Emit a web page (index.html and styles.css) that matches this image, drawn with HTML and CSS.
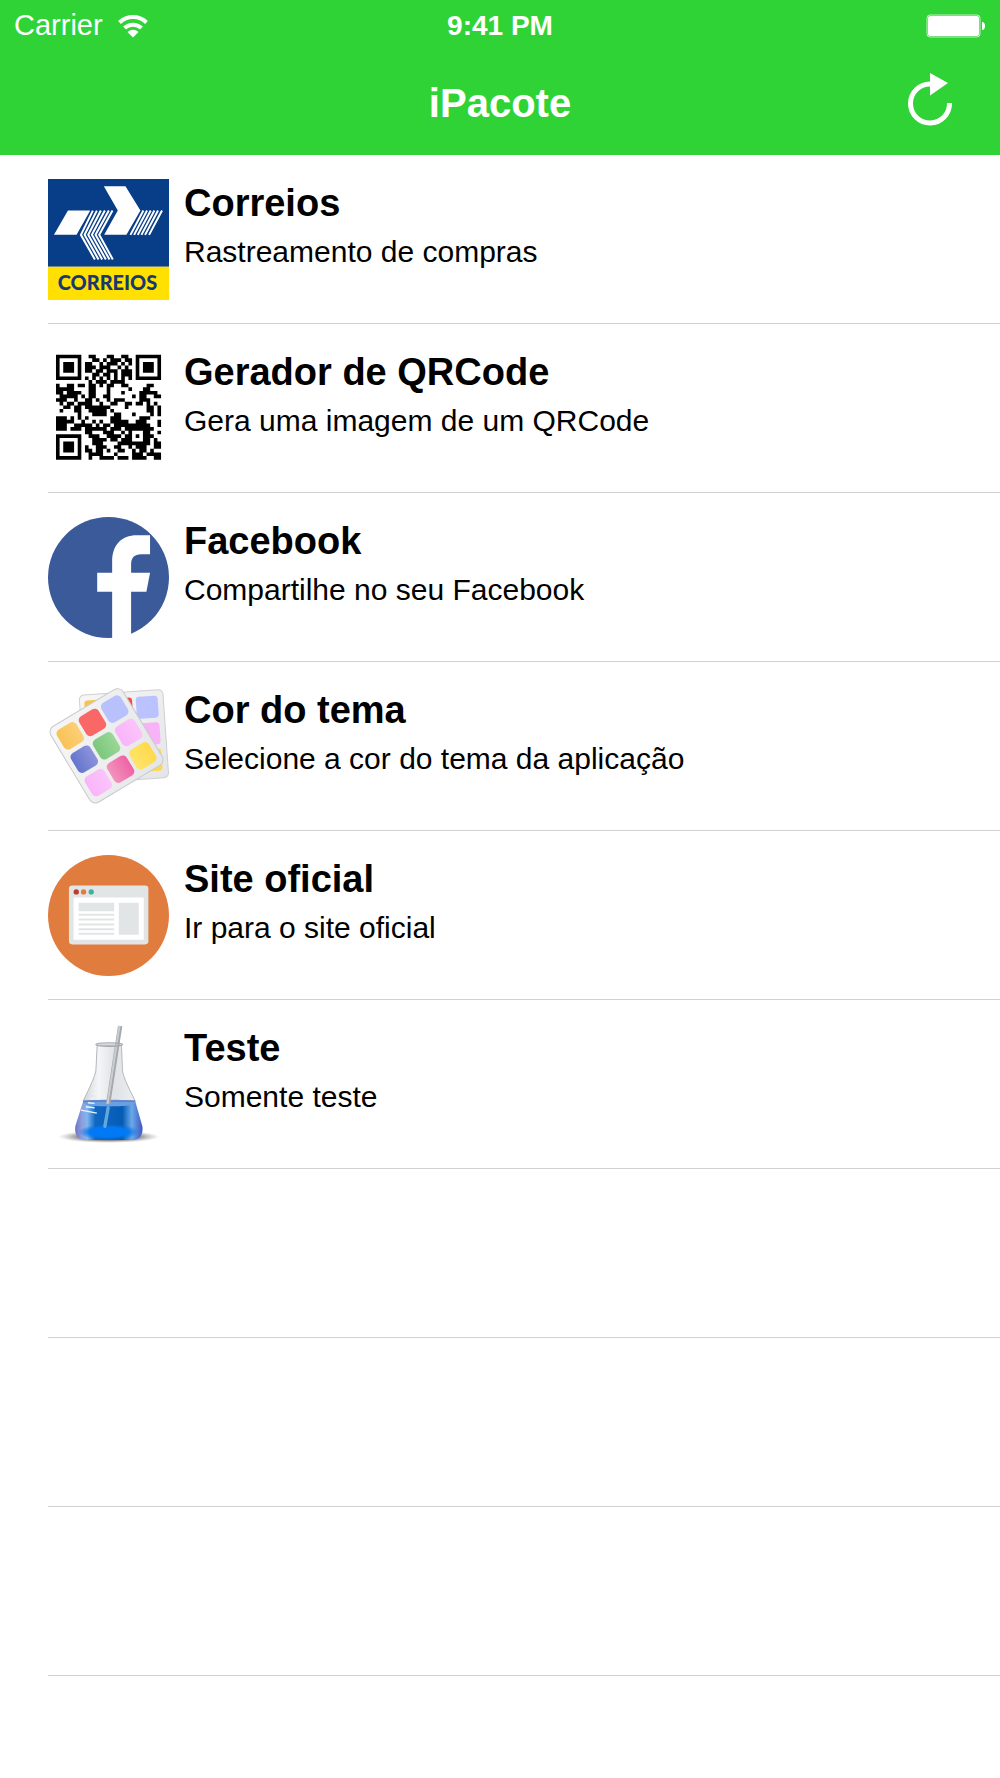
FILE: index.html
```html
<!DOCTYPE html>
<html lang="pt-BR">
<head>
    <meta charset="UTF-8">
    <meta name="viewport" content="width=device-width, initial-scale=1.0">
    <title>iPacote</title>
    <link rel="stylesheet" href="styles.css">
</head>
<body>
    <header>
        <div class="status-bar">
            <div class="carrier">
                <span>Carrier</span>
                <svg class="wifi" viewBox="0 0 60 48" aria-hidden="true">
                    <g fill="none" stroke="#fff" stroke-width="8">
                        <path d="M3 17a39 39 0 0 1 54 0"/>
                        <path d="M13 28a25 25 0 0 1 34 0"/>
                    </g>
                    <path d="M30 47L19 36a16 16 0 0 1 22 0z" fill="#fff"/>
                </svg>
            </div>
            <span class="time">9:41 PM</span>
            <svg class="battery" viewBox="0 0 60 24" aria-hidden="true">
                <rect x="1" y="1" width="53" height="22" rx="3" fill="none" stroke="#fff" stroke-opacity=".7"/>
                <rect x="2" y="2" width="51" height="20" rx="2" fill="#fff"/>
                <path d="M56 8q3 0 3 4t-3 4z" fill="#fff"/>
            </svg>
        </div>
        <div class="nav-bar">
            <h1>iPacote</h1>
            <button type="button" class="refresh" aria-label="Atualizar">
                <svg viewBox="0 0 88 108" aria-hidden="true">
                    <path d="M44 22A39 39 0 1 0 83 60" fill="none" stroke="#fff" stroke-width="10"/>
                    <path d="M44 0l36 20-36 25z" fill="#fff"/>
                </svg>
            </button>
        </div>
    </header>
    <main>
        <ul class="menu">
            <li>
                <a href="#correios">
                    <svg class="icon" viewBox="24 26 364 364" aria-hidden="true">
                        <path fill="#083e87" d="M24 26h364v264H24z"/>
                        <path fill="#ffe000" d="M24 290h364v100H24z"/>
                        <g fill="#fff">
                            <path d="M84 121h67l-41 73H42zM192 48h65l45 73-42 73h-67l41-73z"/>
                        </g>
                        <g fill="none" stroke="#fff" stroke-width="6">
                            <path d="M159 121l-36 73 42 74M171 121l-37 73 42 74M183 121l-38 73 42 74M195 121l-39 73 42 74M207 121l-40 73 42 74M218 121l-40 73 41 74"/>
                            <path d="M311 121l-39 73M322 121l-39 73M333 121l-39 73M344 121l-39 73M355 121l-39 73M367 121l-39 73"/>
                        </g>
                        <text class="correios-name" x="203" y="361" text-anchor="middle">CORREIOS</text>
                    </svg>
                    <div class="text">
                        <h2>Correios</h2>
                        <p>Rastreamento de compras</p>
                    </div>
                </a>
            </li>
            <li>
                <a href="#qrcode">
                    <svg class="icon" viewBox="0 0 364 364" aria-hidden="true">
                        <path id="qr-modules" transform="translate(24 20) scale(10.9)"/>
                    </svg>
                    <div class="text">
                        <h2>Gerador de QRCode</h2>
                        <p>Gera uma imagem de um QRCode</p>
                    </div>
                </a>
            </li>
            <li>
                <a href="#facebook">
                    <svg class="icon" viewBox="24 21 364 364" aria-hidden="true">
                        <circle cx="206" cy="203" r="182" fill="#3b5a9a"/>
                        <path fill="#fff" d="M217 385V246h-45v-57h45v-34c0-50 28-79 74-79h40v57h-27c-20 0-30 11-30 30v26h57l-11 57h-46v139z"/>
                    </svg>
                    <div class="text">
                        <h2>Facebook</h2>
                        <p>Compartilhe no seu Facebook</p>
                    </div>
                </a>
            </li>
            <li>
                <a href="#tema">
                    <svg class="icon" viewBox="24 18 364 364" aria-hidden="true">
                        <defs>
                            <linearGradient id="card" x1="0" y1="0" x2="1" y2="1">
                                <stop offset="0" stop-color="#f7f7f7"/>
                                <stop offset="1" stop-color="#e4e5e7"/>
                            </linearGradient>
                            <linearGradient id="orange"><stop stop-color="#f9c256"/><stop offset="1" stop-color="#fbd077"/></linearGradient>
                            <linearGradient id="yellow"><stop stop-color="#ffe46a"/><stop offset="1" stop-color="#ffd94a"/></linearGradient>
                            <linearGradient id="indigo"><stop stop-color="#6475cb"/><stop offset="1" stop-color="#8c93dd"/></linearGradient>
                            <linearGradient id="green"><stop stop-color="#7bc77d"/><stop offset="1" stop-color="#99d796"/></linearGradient>
                            <linearGradient id="lilac"><stop stop-color="#f9b4fb"/><stop offset="1" stop-color="#fbc4fa"/></linearGradient>
                            <linearGradient id="pink"><stop stop-color="#f293bd"/><stop offset="1" stop-color="#ee63a5"/></linearGradient>
                        </defs>
                        <g transform="translate(252 163) rotate(-4)">
                            <rect x="-126" y="-126" width="252" height="265" rx="14" fill="url(#card)" stroke="#cfcfd1" stroke-width="3"/>
                            <rect x="-112" y="-109" width="66" height="66" rx="10" fill="#f6c34f"/>
                            <rect x="-34" y="-109" width="66" height="66" rx="10" fill="#ee4f50"/>
                            <rect x="43" y="-109" width="66" height="66" rx="10" fill="#bac2ff"/>
                            <rect x="43" y="-29" width="66" height="66" rx="10" fill="#f8b2f8"/>
                            <rect x="43" y="51" width="66" height="66" rx="10" fill="#ffd84f"/>
                        </g>
                        <g transform="translate(200 198) rotate(-31)">
                            <rect x="-127" y="-133" width="254" height="266" rx="20" fill="url(#card)" stroke="#c8c9cb" stroke-width="3"/>
                            <rect x="-112" y="-116" width="68" height="68" rx="14" fill="url(#orange)"/>
                            <rect x="-34" y="-116" width="68" height="68" rx="14" fill="#fa6767"/>
                            <rect x="44" y="-116" width="68" height="68" rx="14" fill="#b9c1fd"/>
                            <rect x="-112" y="-34" width="68" height="68" rx="14" fill="url(#indigo)"/>
                            <rect x="-34" y="-34" width="68" height="68" rx="14" fill="url(#green)"/>
                            <rect x="44" y="-34" width="68" height="68" rx="14" fill="url(#lilac)"/>
                            <rect x="-112" y="48" width="68" height="68" rx="14" fill="url(#lilac)"/>
                            <rect x="-34" y="48" width="68" height="68" rx="14" fill="url(#pink)"/>
                            <rect x="44" y="48" width="68" height="68" rx="14" fill="url(#yellow)"/>
                        </g>
                    </svg>
                    <div class="text">
                        <h2>Cor do tema</h2>
                        <p>Selecione a cor do tema da aplicação</p>
                    </div>
                </a>
            </li>
            <li>
                <a href="#site">
                    <svg class="icon" viewBox="24 30 364 364" aria-hidden="true">
                        <circle cx="206" cy="212" r="182" fill="#e17c3f"/>
                        <rect x="87" y="122" width="239" height="177" rx="10" fill="#e1e5e6"/>
                        <circle cx="109" cy="141" r="8" fill="#c03a2b"/>
                        <circle cx="131" cy="141" r="8" fill="#e17c3f"/>
                        <circle cx="154" cy="141" r="8" fill="#3fb39a"/>
                        <path fill="#fff" d="M101 158h211v127H101z"/>
                        <path fill="#e1e5e6" d="M116 174h107v25H116zM237 174h60v96h-60zM116 207h107v6H116zM116 221h107v6H116zM116 236h107v6H116zM116 250h107v6H116zM116 264h107v6H116z"/>
                    </svg>
                    <div class="text">
                        <h2>Site oficial</h2>
                        <p>Ir para o site oficial</p>
                    </div>
                </a>
            </li>
            <li>
                <a href="#teste">
                    <svg class="icon" viewBox="24 42 364 364" aria-hidden="true">
                        <defs>
                            <radialGradient id="shadow">
                                <stop offset=".5" stop-color="#555" stop-opacity=".9"/>
                                <stop offset="1" stop-color="#999" stop-opacity="0"/>
                            </radialGradient>
                            <linearGradient id="glass">
                                <stop offset="0" stop-color="#d3d7da"/>
                                <stop offset=".3" stop-color="#f4f5f6"/>
                                <stop offset=".6" stop-color="#dfe3e5"/>
                                <stop offset="1" stop-color="#edeff0"/>
                            </linearGradient>
                            <linearGradient id="liquid">
                                <stop offset="0" stop-color="#6a74c4"/>
                                <stop offset=".1" stop-color="#8d9fe0"/>
                                <stop offset=".18" stop-color="#7fb6ee"/>
                                <stop offset=".3" stop-color="#0f68c4"/>
                                <stop offset=".7" stop-color="#045cb4"/>
                                <stop offset=".84" stop-color="#69a9ea"/>
                                <stop offset="1" stop-color="#3f57c0"/>
                            </linearGradient>
                            <radialGradient id="pool">
                                <stop offset=".6" stop-color="#0079f6"/>
                                <stop offset="1" stop-color="#0a6fe0" stop-opacity="0"/>
                            </radialGradient>
                        </defs>
                        <ellipse cx="207" cy="381" rx="153" ry="19" fill="url(#shadow)"/>
                        <path d="M172 105l-4 78q-3 20-38 90h156q-36-70-38-90l-3-78z" fill="url(#glass)" stroke="#b4b8bc" stroke-width="3"/>
                        <path d="M130 273h156l22 77c3 24-8 41-30 41H136c-22 0-33-17-30-41z" fill="url(#liquid)"/>
                        <ellipse cx="207" cy="367" rx="92" ry="24" fill="url(#pool)"/>
                        <path d="M130 274c30-5 126-5 156 0 6 12-20 16-78 16s-84-4-78-16z" fill="#6d9edf"/>
                        <path d="M130 274h156" stroke="#5b6fbf" stroke-width="3"/>
                        <path d="M205 294l-10 56" stroke="#62a8de" stroke-width="10" stroke-linecap="round"/>
                        <path d="M241 48l-36 234" stroke="#a4a7ab" stroke-width="13"/>
                        <path d="M239 48l-36 234" stroke="#c9ccd0" stroke-width="6"/>
                        <ellipse cx="208" cy="104" rx="40" ry="5" fill="none" stroke="#a1a6ab" stroke-width="4"/>
                        <path d="M169 221h9M163 236h9M157 251h10M151 266h12M144 279l20 2M138 291l26 3M123 301l48 9" stroke="#eef4fa" stroke-width="4"/>
                    </svg>
                    <div class="text">
                        <h2>Teste</h2>
                        <p>Somente teste</p>
                    </div>
                </a>
            </li>
            <li></li>
            <li></li>
            <li></li>
        </ul>
    </main>
    <script>
        const rows = [
            '11111110011000110011001111111',
            '10000010001101011101101000001',
            '10111010110010111010101011101',
            '10111010111011100101001011101',
            '10111010110110111011101011101',
            '10000010001101101011101000001',
            '11111110101010101010101111111',
            '00000000010111011110000000000',
            '10011011011010110011000001100',
            '11111000011000100000100011000',
            '11011110011000100010000111110',
            '01111101011001100000010110011',
            '11100100110100101110000111000',
            '01011011110010011001101101010',
            '00110110111111100001000001101',
            '01000110011111010000000001101',
            '00000010001111001100010000101',
            '11101010100000011100000111000',
            '11111001001010011111001110001',
            '11100111110101101111111111001',
            '11101110111111011101111111100',
            '00000000110001110010100011001',
            '11111110011100111101101011100',
            '10000010001111011011100011010',
            '10111010001110000111111111011',
            '10111010100111001100101110011',
            '10111010110110100110010110100',
            '10000010011110001000011101111',
            '11111110010011110111011110011'
        ];

        let d = '';
        rows.forEach((row, y) => {
            [...row].forEach((cell, x) => {
                if (cell === '1') {
                    d += `M${x} ${y}h1v1h-1z`;
                }
            });
        });
        document.getElementById('qr-modules').setAttribute('d', d);
    </script>
</body>
</html>
```
FILE: styles.css
```css
* {
    box-sizing: border-box;
}

body {
    font-family: "Liberation Sans", Arial, sans-serif;
    margin: 0;
    background-color: #fff;
    color: #000;
}

header {
    background-color: #2fd335;
    color: #fff;
}

.status-bar {
    display: grid;
    grid-template-columns: 1fr auto 1fr;
    align-items: center;
    height: 51px;
    padding: 0 14px;
    font-size: 29px;
}

.carrier {
    display: flex;
    align-items: center;
    gap: 15px;
}

.wifi {
    width: 30px;
    height: 24px;
}

.time {
    font-size: 28px;
    font-weight: bold;
}

.battery {
    width: 60px;
    height: 24px;
    justify-self: end;
}

.nav-bar {
    display: grid;
    grid-template-columns: 1fr auto 1fr;
    align-items: center;
    height: 104px;
    padding: 0 48px;
}

.nav-bar h1 {
    grid-column: 2;
    margin: 0;
    font-size: 40px;
}

.refresh {
    justify-self: end;
    padding: 0 0 6px;
    border: none;
    background: none;
    cursor: pointer;
}

.refresh svg {
    display: block;
    width: 44px;
    height: 54px;
}

.menu {
    list-style: none;
    margin: 0;
    padding: 0 0 0 48px;
}

.menu li {
    min-height: 169px;
    border-bottom: 1px solid #d0cfd3;
}

.menu a {
    display: flex;
    gap: 15px;
    padding: 24px 0 23px;
    color: inherit;
    text-decoration: none;
}

.icon {
    flex: none;
    width: 121px;
    height: 121px;
}

.correios-name {
    font-family: Lato, sans-serif;
    font-size: 60px;
    font-weight: 900;
    fill: #17396f;
}

.text h2 {
    margin: 0;
    font-size: 38px;
    line-height: 48px;
}

.text p {
    margin: 0;
    font-size: 30px;
    line-height: 50px;
}
```
